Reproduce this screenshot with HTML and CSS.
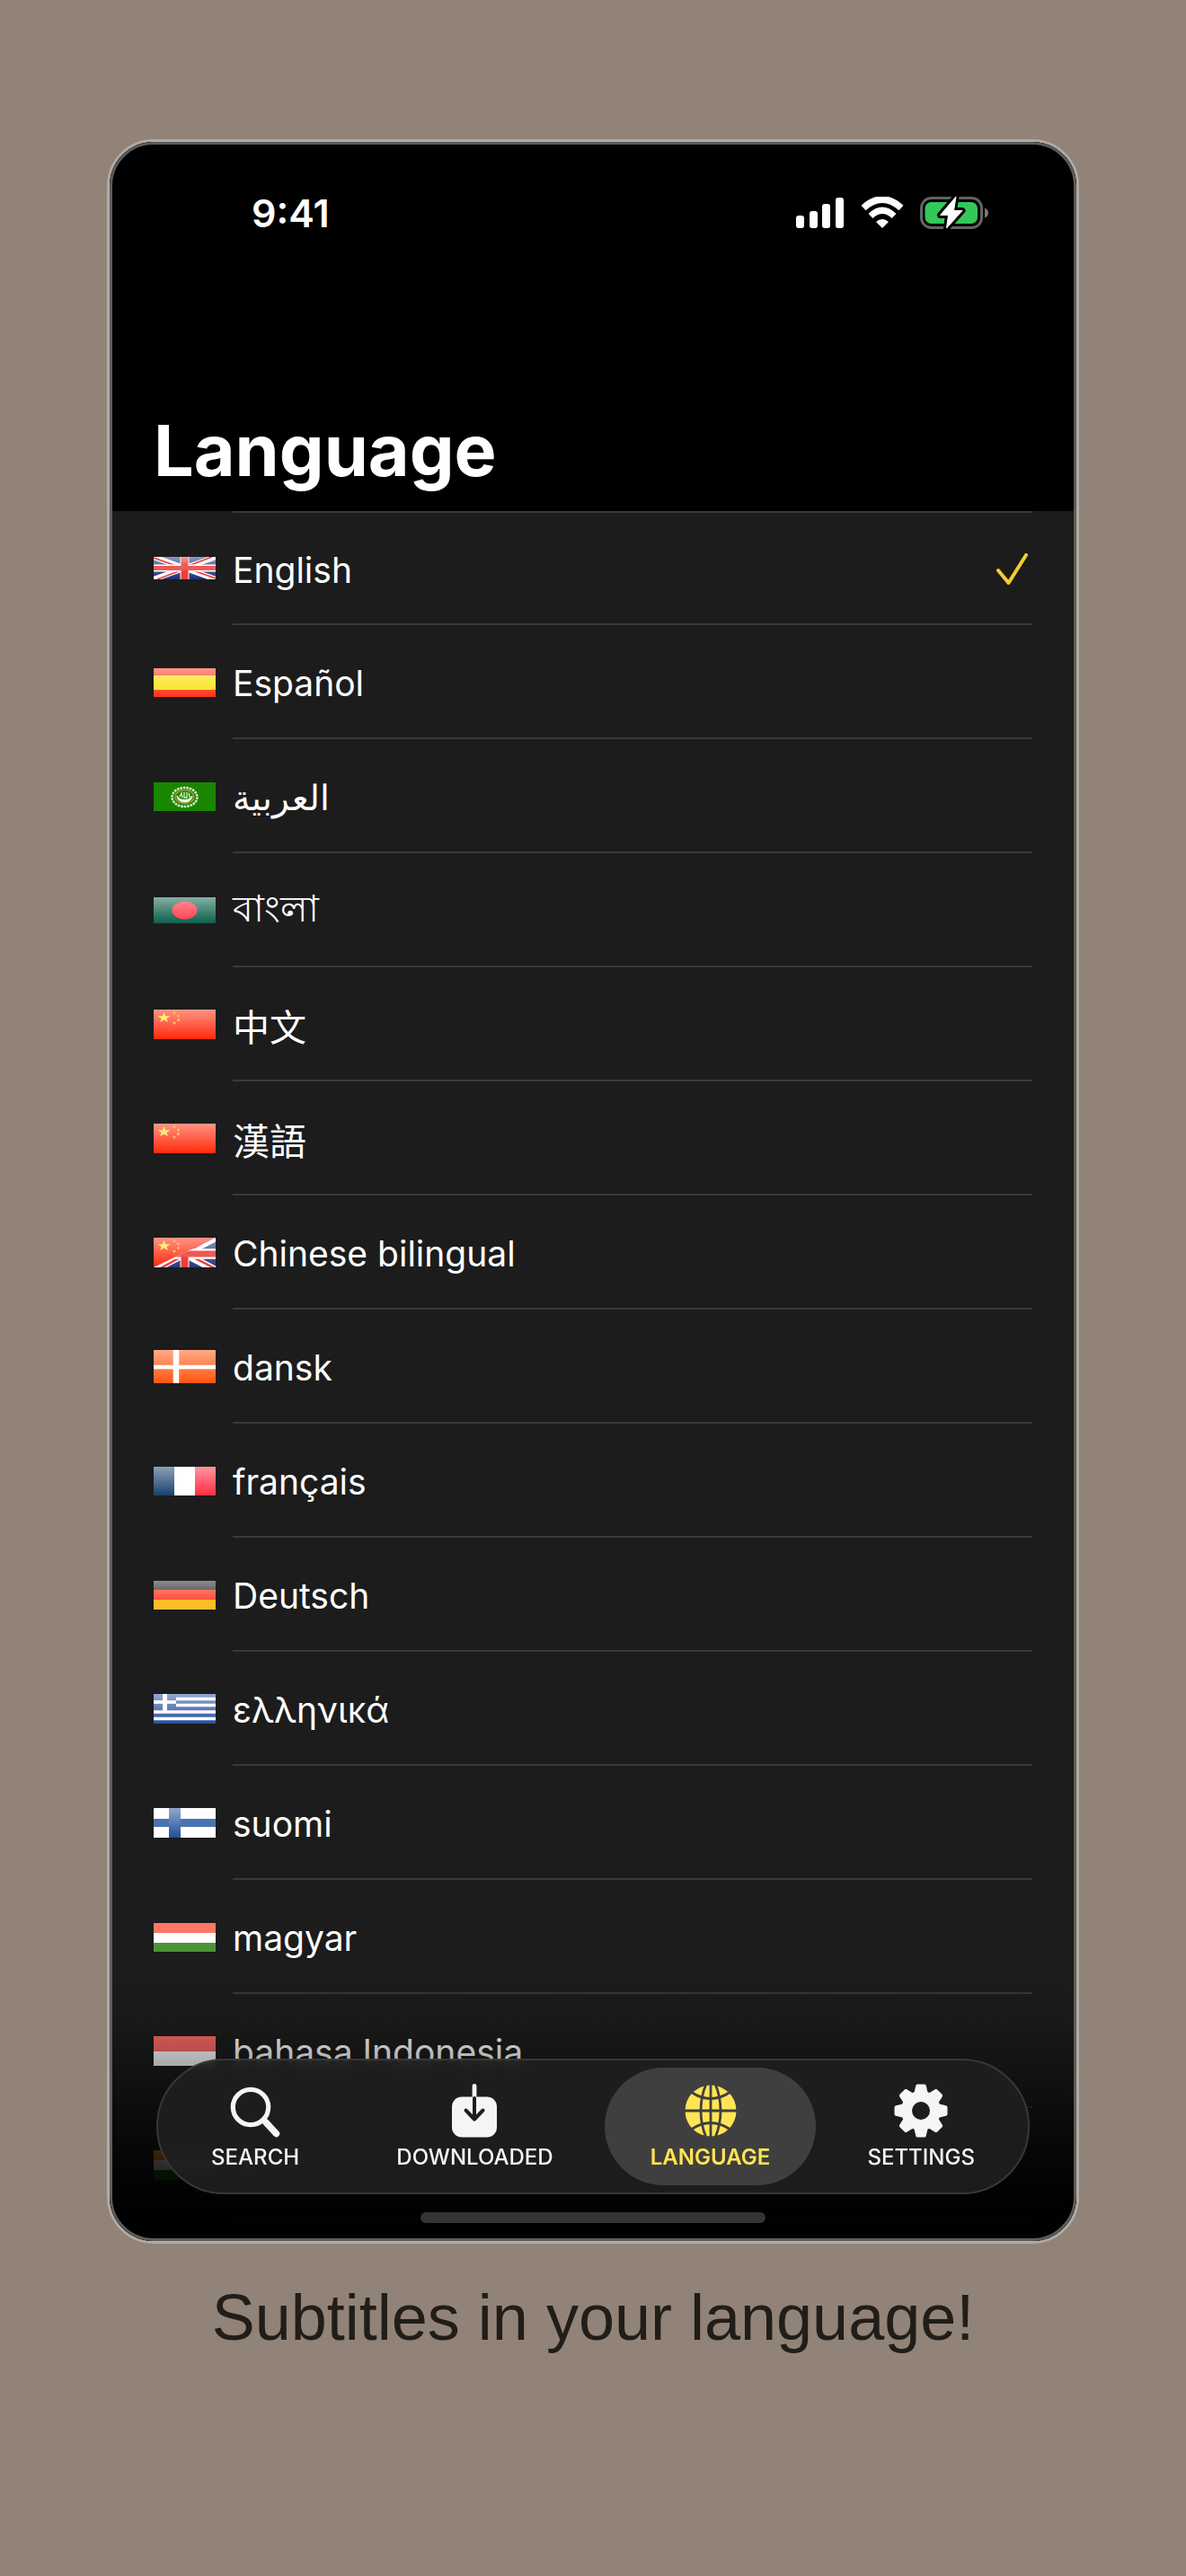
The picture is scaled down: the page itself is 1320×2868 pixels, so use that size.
FILE: index.html
```html
<!DOCTYPE html>
<html lang="en">
<head>
    <meta charset="UTF-8">
    <meta name="viewport" content="width=device-width, initial-scale=1.0">
    <title>Subtitles in your language!</title>
    <link rel="stylesheet" href="styles.css">
</head>
<body>
    <!-- Shared gradients and flag shapes -->
    <svg class="defs" aria-hidden="true">
        <defs>
            <linearGradient id="gloss" x1="0" y1="0" x2="0" y2="1">
                <stop offset="0" stop-color="#fff" stop-opacity="0.5"/>
                <stop offset="1" stop-color="#fff" stop-opacity="0"/>
            </linearGradient>
            <clipPath id="lower-half">
                <path d="M0 33L69 0V33Z"/>
            </clipPath>
            <symbol id="china" viewBox="0 0 69 33">
                <rect width="69" height="33" fill="#ff2a0a"/>
                <rect width="69" height="33" fill="url(#gloss)"/>
                <path d="M11.500 3L13.200 7.200H18.500L14.400 9.900L15.900 14L11.500 11.500L7.100 14L8.600 9.900L4.500 7.200H9.800Z" fill="#ffee7a"/>
                <g fill="#ffc25e">
                    <circle cx="23" cy="3.500" r="1.500"/>
                    <circle cx="27.500" cy="7" r="1.500"/>
                    <circle cx="27.500" cy="11.500" r="1.500"/>
                    <circle cx="23" cy="15" r="1.500"/>
                </g>
            </symbol>
            <symbol id="britain" viewBox="0 0 69 25" preserveAspectRatio="none">
                <rect width="69" height="25" fill="#1b2f7c"/>
                <rect width="69" height="25" fill="url(#gloss)"/>
                <path d="M0 0L69 25M69 0L0 25" stroke="#fff" stroke-width="6"/>
                <path d="M0 1L28 11M69 24L41 14M65 0L40 9.500M4 25L29 15.500" stroke="#f0403c" stroke-width="1.800"/>
                <path d="M34.500 0V25" stroke="#fff" stroke-width="10"/>
                <path d="M0 12.500H69" stroke="#fff" stroke-width="8"/>
                <path d="M34.500 0V25" stroke="#ee3f3a" stroke-width="8"/>
                <path d="M0 12.500H69" stroke="#ee5a54" stroke-width="5"/>
                <rect x="30.500" width="8" height="12" fill="url(#gloss)"/>
            </symbol>
        </defs>
    </svg>

    <main class="phone">
        <header class="header">
            <div class="status-bar">
                <span class="time">9:41</span>
                <div class="status-icons">
                    <svg width="54" height="36" viewBox="0 0 54 36" fill="#fff" aria-label="Signal">
                        <rect x="0" y="21" width="9" height="14" rx="3"/>
                        <rect x="15" y="16" width="9" height="19" rx="3"/>
                        <rect x="29" y="8" width="9" height="27" rx="3"/>
                        <rect x="44" y="1" width="9" height="34" rx="3"/>
                    </svg>
                    <svg width="48" height="36" viewBox="0 0 48 36" aria-label="Wi-Fi">
                        <path d="M3 12.500Q24 -6.500 45 12.500" fill="none" stroke="#fff" stroke-width="7.500"/>
                        <path d="M11 21.500Q24 9 37 21.500" fill="none" stroke="#fff" stroke-width="7"/>
                        <path d="M17 28Q24 22 31 28L24 35Z" fill="#fff"/>
                    </svg>
                    <svg width="76" height="38" viewBox="0 0 76 38" aria-label="Battery charging">
                        <rect x="1.500" y="2.500" width="67" height="33" rx="11" fill="none" stroke="#636363" stroke-width="3"/>
                        <path d="M72 13.500Q76 15 76 19T72 24.500Z" fill="#7a7a7a"/>
                        <rect x="5.500" y="7" width="58.500" height="24" rx="7" fill="#34c759"/>
                        <path d="M40 1L22.500 21.500H31.500L29.500 36L47 16.500H37.500Z" fill="#fff" stroke="#000" stroke-width="7" stroke-linejoin="round"/>
                        <path d="M40 1L22.500 21.500H31.500L29.500 36L47 16.500H37.500Z" fill="#fff" stroke="#fff" stroke-width="1" stroke-linejoin="round"/>
                    </svg>
                </div>
            </div>
            <h1 class="page-title">Language</h1>
        </header>

        <ul class="language-list">
            <li><button class="language" type="button" aria-pressed="true">
                <svg class="flag" viewBox="0 0 69 25"><use href="#britain" width="69" height="25"/></svg>
                <span class="name">English
                    <svg class="check" viewBox="0 0 40 36" aria-label="Selected"><path d="M2 19L13.500 33L33 2"/></svg>
                </span>
            </button></li>
            <li><button class="language" type="button">
                <svg class="flag" viewBox="0 0 69 32">
                    <rect width="69" height="32" fill="#ff3319"/>
                    <rect width="69" height="32" fill="url(#gloss)"/>
                    <rect y="8" width="69" height="16" fill="#fbe52e"/>
                    <rect y="8" width="69" height="16" fill="url(#gloss)" opacity="0.500"/>
                </svg>
                <span class="name">Español</span>
            </button></li>
            <li><button class="language" type="button">
                <svg class="flag" viewBox="0 0 69 32">
                    <rect width="69" height="32" fill="#198600"/>
                    <ellipse cx="34.500" cy="16.500" rx="14" ry="10.500" fill="none" stroke="#dfe9d8" stroke-width="2.500" stroke-dasharray="2.500 1"/>
                    <ellipse cx="34.500" cy="16" rx="10.500" ry="7.500" fill="none" stroke="#8a9b23" stroke-width="2"/>
                    <path d="M26 15Q27 22 34.500 22T43 15Q41 19.500 34.500 19.500T26 15Z" fill="#fff" stroke="#fff"/>
                    <path d="M29 16L31 12L32 17M34 11V17H37V11M39 12L40.500 17" fill="none" stroke="#e6efe0" stroke-width="1.300"/>
                </svg>
                <span class="name" lang="ar">العربية</span>
            </button></li>
            <li><button class="language" type="button">
                <svg class="flag" viewBox="0 0 69 29">
                    <rect width="69" height="29" fill="#0c5f4a"/>
                    <rect width="69" height="29" fill="url(#gloss)"/>
                    <ellipse cx="34.500" cy="14.500" rx="14" ry="10" fill="#ff4456"/>
                    <ellipse cx="34.500" cy="14.500" rx="14" ry="10" fill="url(#gloss)" opacity="0.700"/>
                </svg>
                <span class="name" lang="bn">বাংলা</span>
            </button></li>
            <li><button class="language" type="button">
                <svg class="flag" viewBox="0 0 69 33"><use href="#china" width="69" height="33"/></svg>
                <span class="name" lang="zh-Hans">中文</span>
            </button></li>
            <li><button class="language" type="button">
                <svg class="flag" viewBox="0 0 69 33"><use href="#china" width="69" height="33"/></svg>
                <span class="name" lang="zh-Hant">漢語</span>
            </button></li>
            <li><button class="language" type="button">
                <svg class="flag" viewBox="0 0 69 33">
                    <use href="#china" width="69" height="33"/>
                    <g clip-path="url(#lower-half)"><use href="#britain" width="69" height="36"/></g>
                </svg>
                <span class="name">Chinese bilingual</span>
            </button></li>
            <li><button class="language" type="button">
                <svg class="flag" viewBox="0 0 69 37">
                    <rect width="69" height="37" fill="#ff560f"/>
                    <rect width="69" height="37" fill="url(#gloss)"/>
                    <path d="M25 0V37" stroke="#fff" stroke-width="6.500"/>
                    <path d="M0 19H69" stroke="#fff" stroke-width="4.500"/>
                </svg>
                <span class="name" lang="da">dansk</span>
            </button></li>
            <li><button class="language" type="button">
                <svg class="flag" viewBox="0 0 69 32">
                    <rect width="23" height="32" fill="#1a426d"/>
                    <rect x="23" width="23" height="32" fill="#fff"/>
                    <rect x="46" width="23" height="32" fill="#ff2d42"/>
                    <rect width="69" height="32" fill="url(#gloss)"/>
                </svg>
                <span class="name" lang="fr">français</span>
            </button></li>
            <li><button class="language" type="button">
                <svg class="flag" viewBox="0 0 69 32">
                    <rect width="69" height="11" fill="#1c1819"/>
                    <rect y="10" width="69" height="12" fill="#ff2b12"/>
                    <rect width="69" height="32" fill="url(#gloss)"/>
                    <rect y="21" width="69" height="11" fill="#fcbe26"/>
                </svg>
                <span class="name" lang="de">Deutsch</span>
            </button></li>
            <li><button class="language" type="button">
                <svg class="flag" viewBox="0 0 69 33">
                    <rect width="69" height="33" fill="#2751a0"/>
                    <rect width="69" height="33" fill="url(#gloss)"/>
                    <path d="M25 5.500H69M25 12.500H69M0 20H69M0 27.500H69" stroke="#fff" stroke-width="3.700"/>
                    <path d="M12.500 0V18.500" stroke="#fff" stroke-width="5"/>
                    <path d="M0 9H25" stroke="#fff" stroke-width="3.700"/>
                </svg>
                <span class="name" lang="el">ελληνικά</span>
            </button></li>
            <li><button class="language" type="button">
                <svg class="flag" viewBox="0 0 69 33">
                    <rect width="69" height="33" fill="#fff"/>
                    <rect y="12" width="69" height="9" fill="#4a74b1"/>
                    <rect x="17" width="13" height="33" fill="#204f9b"/>
                    <rect x="17" width="13" height="33" fill="url(#gloss)"/>
                </svg>
                <span class="name" lang="fi">suomi</span>
            </button></li>
            <li><button class="language" type="button">
                <svg class="flag" viewBox="0 0 69 32">
                    <rect width="69" height="11" fill="#ff7663"/>
                    <rect y="11" width="69" height="11" fill="#fff"/>
                    <rect y="22" width="69" height="10" fill="#4b9538"/>
                </svg>
                <span class="name" lang="hu">magyar</span>
            </button></li>
            <li><button class="language" type="button">
                <svg class="flag" viewBox="0 0 69 33">
                    <rect width="69" height="17" fill="#fb6a67"/>
                    <rect y="17" width="69" height="16" fill="#fff"/>
                </svg>
                <span class="name" lang="id">bahasa Indonesia</span>
            </button></li>
            <li><button class="language" type="button">
                <svg class="flag" viewBox="0 0 69 33">
                    <rect width="69" height="11" fill="#ff9933"/>
                    <rect y="11" width="69" height="11" fill="#fff"/>
                    <rect y="22" width="69" height="11" fill="#138808"/>
                </svg>
                <span class="name" lang="hi">हिन्दी</span>
            </button></li>
        </ul>

        <div class="bottom-fade"></div>

        <nav class="tab-bar">
            <a class="tab" href="#search">
                <svg class="tab-icon" viewBox="0 0 60 60" fill="none" stroke="currentColor" stroke-linecap="round">
                    <circle cx="25" cy="26" r="19.700" stroke-width="5.200"/>
                    <path d="M39 40L42 43" stroke-width="5"/>
                    <path d="M42 43L53.500 55.500" stroke-width="7.500"/>
                </svg>
                <span>SEARCH</span>
            </a>
            <a class="tab" href="#downloaded">
                <svg class="tab-icon" viewBox="0 0 60 60" fill="none" stroke-linecap="round" stroke-linejoin="round">
                    <path d="M30 2.500V14" stroke="currentColor" stroke-width="4.800"/>
                    <rect x="5" y="14.500" width="50" height="45" rx="11" fill="currentColor"/>
                    <path d="M30 16V39M20.500 29.500L30 39.500L39.500 29.500" stroke="#1e1e1e" stroke-width="4"/>
                </svg>
                <span>DOWNLOADED</span>
            </a>
            <a class="tab tab-active" href="#language" aria-current="page">
                <svg class="tab-icon" viewBox="0 0 60 60" fill="none">
                    <circle cx="30" cy="30" r="28.500" fill="currentColor"/>
                    <g stroke="#3f3f3f" stroke-width="2.800">
                        <path d="M30 0V60M0 30H60"/>
                        <path d="M25 0C17 19 17 41 25 60M35 0C43 19 43 41 35 60"/>
                        <path d="M8 9Q30 24 52 9M8 51Q30 36 52 51"/>
                    </g>
                </svg>
                <span>LANGUAGE</span>
            </a>
            <a class="tab" href="#settings">
                <svg class="tab-icon" viewBox="-30 -30 60 60" fill="currentColor" stroke="currentColor" stroke-linejoin="round">
                    <circle r="16" fill="none" stroke-width="12"/>
                    <g stroke-width="4">
                        <path id="tooth" d="M-5.500 -20L-3.800 -27.500H3.800L5.500 -20Z"/>
                        <use href="#tooth" transform="rotate(45)"/>
                        <use href="#tooth" transform="rotate(90)"/>
                        <use href="#tooth" transform="rotate(135)"/>
                        <use href="#tooth" transform="rotate(180)"/>
                        <use href="#tooth" transform="rotate(225)"/>
                        <use href="#tooth" transform="rotate(270)"/>
                        <use href="#tooth" transform="rotate(315)"/>
                    </g>
                </svg>
                <span>SETTINGS</span>
            </a>
        </nav>
        <div class="home-indicator"></div>
    </main>

    <p class="caption">Subtitles in your language!</p>
</body>
</html>
```

FILE: styles.css
```css
* {
    box-sizing: border-box;
}

body {
    margin: 0;
    padding: 155px 119px;
    min-height: 100vh;
    background-color: #918377;
    font-family: Inter, "Noto Sans", "Noto Sans CJK SC", sans-serif;
    color: #fff;
}

.defs {
    position: absolute;
    width: 0;
    height: 0;
}

.phone {
    position: relative;
    overflow: hidden;
    padding-bottom: 21px;
    border: 3px solid #b4a9a1;
    border-radius: 52px;
    background-color: #1c1c1c;
}

/* inner line of the frame, drawn above the content */
.phone::after {
    content: "";
    position: absolute;
    inset: 0;
    border: 3px solid #5c5c5c;
    border-radius: 49px;
    pointer-events: none;
}

.header {
    height: 411px;
    padding: 48px 49px 20px;
    background-color: #000;
    display: flex;
    flex-direction: column;
    justify-content: space-between;
}

.status-bar {
    display: flex;
    justify-content: space-between;
    align-items: center;
    height: 62px;
    padding: 0 49px 0 109px;
}

.time {
    font-size: 43px;
    font-weight: 600;
}

.status-icons {
    display: flex;
    align-items: center;
    gap: 18px;
}

.page-title {
    margin: 0;
    font-size: 79px;
    line-height: 96px;
    font-weight: 700;
}

.language-list {
    list-style: none;
    margin: 0;
    padding: 0;
}

.language {
    display: flex;
    align-items: center;
    gap: 19px;
    width: 100%;
    height: 127px;
    padding: 0 49px;
    border: none;
    background: none;
    color: inherit;
    font: inherit;
    font-size: 39px;
    text-align: left;
    cursor: pointer;
}

.flag {
    flex: none;
    width: 69px;
}

.name {
    flex: 1;
    display: flex;
    align-items: center;
    justify-content: space-between;
    height: 100%;
    padding-top: 3px;
    border-bottom: 2px solid #393939;
}

.name:lang(zh),
.name:lang(bn) {
    font-size: 41px;
}

li:first-child .name {
    border-top: 2px solid #393939;
}

.check {
    width: 40px;
    fill: none;
    stroke: #f8cc30;
    stroke-width: 4;
    stroke-linecap: round;
    stroke-linejoin: round;
}

.bottom-fade {
    position: absolute;
    left: 0;
    right: 0;
    bottom: 0;
    height: 310px;
    background: linear-gradient(rgba(0, 0, 0, 0), rgba(0, 0, 0, 0.1) 20%, rgba(0, 0, 0, 0.35) 38%, rgba(0, 0, 0, 0.78) 68%, rgba(0, 0, 0, 0.98) 88%);
}

.tab-bar {
    position: absolute;
    left: 52px;
    right: 52px;
    bottom: 52px;
    display: flex;
    gap: 6px;
    padding: 8px;
    border: 2px solid #383838;
    border-radius: 76px;
    background-color: rgba(31, 31, 31, 0.9);
    backdrop-filter: blur(5px);
}

.tab {
    flex: 1 1 auto;
    display: flex;
    flex-direction: column;
    align-items: center;
    gap: 8px;
    height: 131px;
    padding-top: 18px;
    border-radius: 66px;
    color: #f5f5f5;
    font-size: 24px;
    line-height: 28px;
    font-weight: 500;
    text-decoration: none;
}

.tab-active {
    background-color: #3f3f3f;
    color: #ffe554;
    font-weight: 600;
}

.tab-icon {
    width: 60px;
    height: 60px;
}

.home-indicator {
    position: absolute;
    left: 50%;
    bottom: 20px;
    width: 384px;
    height: 12px;
    margin-left: -192px;
    border-radius: 6px;
    background-color: #343434;
}

.caption {
    margin: 38px 0 0;
    font-family: "Liberation Sans", Arial, sans-serif;
    font-size: 72px;
    line-height: 88px;
    text-align: center;
    color: #211d19;
}
```
